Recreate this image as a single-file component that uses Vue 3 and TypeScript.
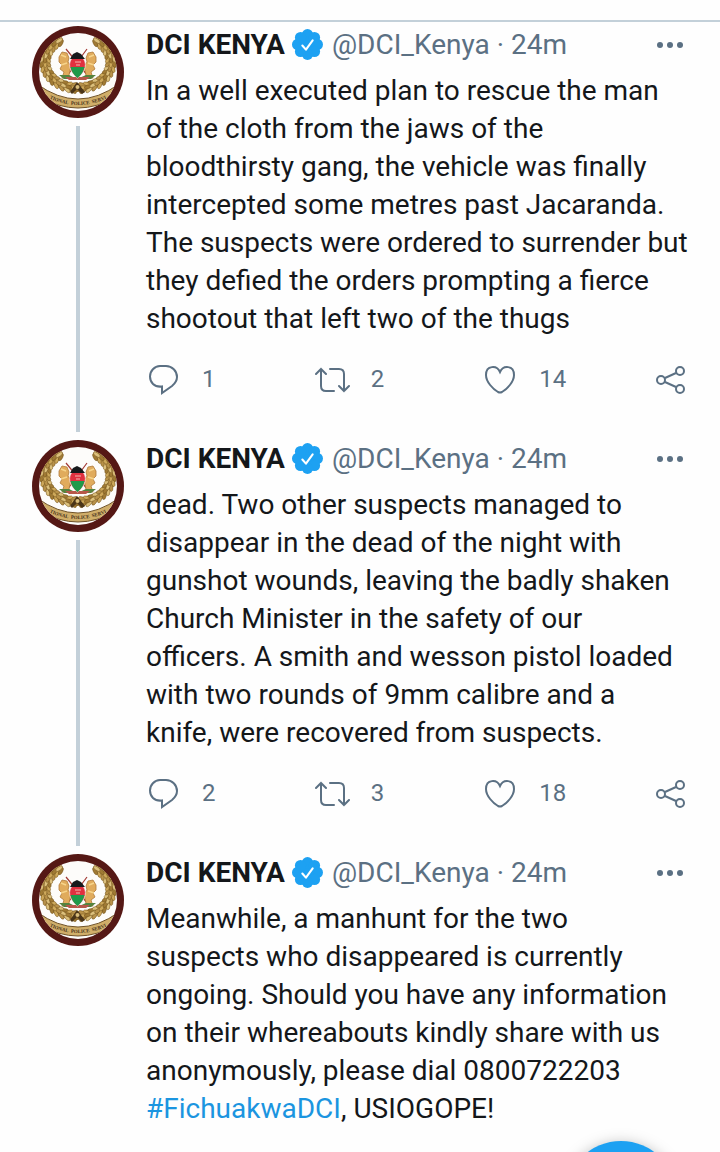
<script setup lang="ts">
interface Tweet {
  id: number
  text: string
  hashtag?: string
  tail?: string
  replies?: number
  retweets?: number
  likes?: number
}

const tweets: Tweet[] = [
  {
    id: 1,
    text: 'In a well executed plan to rescue the man of the cloth from the jaws of the bloodthirsty gang, the vehicle was finally intercepted some metres past Jacaranda. The suspects were ordered to surrender but they defied the orders prompting a fierce shootout that left two of the thugs',
    replies: 1,
    retweets: 2,
    likes: 14,
  },
  {
    id: 2,
    text: 'dead. Two other suspects managed to disappear in the dead of the night with gunshot wounds, leaving the badly shaken Church Minister in the safety of our officers. A smith and wesson pistol loaded with two rounds of 9mm calibre and a knife, were recovered from suspects.',
    replies: 2,
    retweets: 3,
    likes: 18,
  },
  {
    id: 3,
    text: 'Meanwhile, a manhunt for the two\nsuspects who disappeared is currently ongoing. Should you have any information on their whereabouts kindly share with us anonymously, please dial 0800722203 ',
    hashtag: '#FichuakwaDCI',
    tail: ', USIOGOPE!',
  },
]

const motto = 'TIONAL\u00a0 POLICE\u00a0 SERVI'

interface Leaf {
  x: number
  y: number
  turn: number
  fill: string
}

const golds = ['#cda85a', '#a07a34', '#dcc07c', '#b8924a']
const leaves: Leaf[] = []
for (let i = 0; i < 15; i++) {
  const angle = 98 + i * 9.8
  const rad = (angle * Math.PI) / 180
  for (const side of [-1, 1]) {
    for (const lane of [-1, 1, 0]) {
      const x = (33 + lane * 3) * Math.cos(rad)
      const y = (26 + lane * 3) * Math.sin(rad)
      const turn = angle + 90 + lane * 28
      leaves.push({
        x: 46 + side * -x,
        y: 36 + y,
        turn: side === -1 ? turn : -turn,
        fill: golds[(i + lane + 4) % 4],
      })
    }
  }
}
</script>

<template>
  <main class="thread">
    <article v-for="tweet in tweets" :key="tweet.id" class="tweet">
      <div class="rail">
        <svg class="avatar" viewBox="0 0 92 92" role="img" aria-label="DCI Kenya crest">
          <defs>
            <clipPath :id="`disc-${tweet.id}`"><circle cx="46" cy="46" r="39" /></clipPath>
          </defs>
          <circle cx="46" cy="46" r="46" fill="#551815" />
          <circle cx="46" cy="46" r="39" fill="#fdfcfa" />
          <g :clip-path="`url(#disc-${tweet.id})`">
            <path d="M28 15C4 27 6 58 45 62C86 58 88 27 64 15" fill="none" stroke="#8f6c2e" stroke-width="8" />
            <ellipse
              v-for="(leaf, index) in leaves"
              :key="index"
              :cx="leaf.x"
              :cy="leaf.y"
              rx="4"
              ry="1.8"
              :fill="leaf.fill"
              stroke="#76561f"
              stroke-width=".5"
              :transform="`rotate(${leaf.turn} ${leaf.x} ${leaf.y})`"
            />
            <path d="M38 66l7-10 8 10-3 2-5-5-5 5z" fill="#4a3519" />
            <circle cx="45.500" cy="61" r="2" fill="#d9bd7b" />
            <path d="M5 58Q46 88 87 58L84 71Q46 93 8 71Z" fill="#d0ae69" stroke="#6f5227" stroke-width="1" />
            <path :id="`motto-${tweet.id}`" d="M6 66Q46 92 86 66" fill="none" />
            <text class="motto" text-anchor="middle">
              <textPath :href="`#motto-${tweet.id}`" startOffset="50%">{{ motto }}</textPath>
            </text>
          </g>
          <path d="M34 23L56 50M55 23L35 50" stroke="#a33a35" stroke-width="1.200" />
          <path d="M27 31l3-5 5 1 2 5-1 4 3 4-2 9 1 3h-8l2-6-4-3 2-4-3-3zM64 31l-3-5-5 1-2 5 1 4-3 4 2 9-1 3h8l-2-6 4-3-2-4 3-3z" fill="#e0ab5c" stroke="#b07a3a" stroke-width=".8" />
          <path d="M29 29l5 2M29 39l6-2M62 29l-5 2M62 39l-6-2" stroke="#f6d48a" stroke-width="1.500" />
          <path d="M27 49l10 0 8 4 9-4 10 0-5 4H32z" fill="#55833f" />
          <path d="M33 51h25l-4 3H37z" fill="#b7574a" />
          <path d="M45.500 28c10 5 11 15 0 24c-11-9-10-19 0-24z" fill="#e0303f" stroke="#f5e8df" stroke-width=".8" />
          <path d="M38.500 41h14c-1 4-3 8-7 11c-4-3-6-7-7-11z" fill="#1f9a4a" />
          <path d="M38 33l3-5 4-2 4 2 4 5z" fill="#17191b" />
          <path d="M43 36h6M44 39h4" stroke="#f3b8b1" stroke-width="1" />
        </svg>
        <div v-if="tweet.replies !== undefined" class="connector"></div>
      </div>

      <div class="content">
        <header class="heading">
          <strong class="name">DCI KENYA</strong>
          <svg class="verified" viewBox="0 0 30 30" role="img" aria-label="Verified account">
            <g fill="#1da1f2">
              <circle cx="15" cy="15" r="12" />
              <circle cx="15" cy="5.500" r="5.500" /><circle cx="21.700" cy="8.300" r="5.500" />
              <circle cx="24.500" cy="15" r="5.500" /><circle cx="21.700" cy="21.700" r="5.500" />
              <circle cx="15" cy="24.500" r="5.500" /><circle cx="8.300" cy="21.700" r="5.500" />
              <circle cx="5.500" cy="15" r="5.500" /><circle cx="8.300" cy="8.300" r="5.500" />
            </g>
            <path d="M10 16l3.500 4L20 11" fill="none" stroke="#fff" stroke-width="2" stroke-linecap="round" stroke-linejoin="round" />
          </svg>
          <span class="meta">@DCI_Kenya · 24m</span>
          <button class="more" type="button" aria-label="More options">
            <svg width="28" height="8" viewBox="0 0 28 8" fill="currentColor">
              <circle cx="4" cy="4" r="3" /><circle cx="14" cy="4" r="3" /><circle cx="24" cy="4" r="3" />
            </svg>
          </button>
        </header>

        <p class="text">{{ tweet.text }}<a v-if="tweet.hashtag" href="#FichuakwaDCI">{{ tweet.hashtag }}</a>{{ tweet.tail }}</p>

        <footer v-if="tweet.replies !== undefined" class="actions">
          <button type="button" aria-label="Reply">
            <svg width="36" height="32" viewBox="0 0 36 32">
              <path d="M14 3h6a11 11 0 0 1 11 11c0 4-2 6.500-5 9l-10 7v-6.500C8 24.500 4 19 4 13.500A10.500 10.500 0 0 1 14 3z" />
            </svg>
            <span>{{ tweet.replies }}</span>
          </button>
          <button type="button" aria-label="Retweet">
            <svg width="36" height="32" viewBox="0 0 36 32">
              <path d="M1 11l5-5 5 5M6 6v17q0 5 5 5h8M15 6h9q5 0 5 5v17M24 23l5 5 5-5" stroke-linecap="round" />
            </svg>
            <span>{{ tweet.retweets }}</span>
          </button>
          <button type="button" aria-label="Like">
            <svg width="36" height="32" viewBox="0 0 36 32">
              <path d="M17 9C14 2 3 2 3 12c0 7 7 14 12 17q2 1 4 0c5-3 12-10 12-17C31 2 20 2 17 9z" />
            </svg>
            <span>{{ tweet.likes }}</span>
          </button>
          <button class="share" type="button" aria-label="Share">
            <svg width="32" height="32" viewBox="0 0 32 32">
              <circle cx="7" cy="17" r="4" /><circle cx="26" cy="8" r="4" /><circle cx="26" cy="26" r="4" />
              <path d="M11 15l11-5M11 19l11 5" />
            </svg>
          </button>
        </footer>
      </div>
    </article>
    <button class="compose" type="button" aria-label="Compose"></button>
  </main>
</template>

<style>
body {
  margin: 0;
  background: #fefefe;
}
</style>

<style scoped>
.thread {
  margin-top: 20px;
  border-top: 2px solid #c3d0d9;
  padding: 4px 32px 0;
  font-family: Roboto, "Liberation Sans", sans-serif;
  color: #14171a;
}
.tweet {
  display: flex;
  gap: 22px;
}
.rail {
  display: flex;
  flex: none;
  flex-direction: column;
  align-items: center;
  gap: 8px;
  padding-bottom: 8px;
}
.avatar {
  display: block;
  width: 92px;
  height: 92px;
}
.motto {
  font: bold 5px "Liberation Serif", serif;
  fill: #46311a;
}
.connector {
  flex: 1;
  width: 4px;
  background: #c3d0d9;
}
.content {
  flex: 1;
  min-width: 0;
}
.heading {
  display: flex;
  align-items: center;
  height: 38px;
  font-size: 28px;
  line-height: 38px;
  white-space: nowrap;
}
.name {
  font-weight: 700;
}
.verified {
  flex: none;
  width: 31px;
  height: 31px;
  margin: 0 9px 2px 7px;
}
.meta {
  color: #5b7083;
}
button {
  border: 0;
  padding: 0;
  background: none;
  color: #5b7083;
  font: inherit;
}
.more {
  display: flex;
  margin-left: auto;
  padding: 4px;
}
.text {
  margin: 8px 0 0;
  font-size: 28px;
  line-height: 38px;
  white-space: pre-line;
}
.text a {
  color: #1b95e0;
  text-decoration: none;
}
.actions {
  display: flex;
  padding: 24px 0 44px;
}
.actions button {
  display: flex;
  flex: 1;
  align-items: center;
  gap: 20px;
  height: 34px;
  font-size: 24px;
}
.actions .share {
  flex: none;
  width: 36px;
  justify-content: center;
}
.actions svg {
  flex: none;
  fill: none;
  stroke: currentColor;
  stroke-width: 2;
}
.compose {
  position: fixed;
  right: 43px;
  bottom: -101px;
  width: 112px;
  height: 112px;
  border-radius: 50%;
  background: #1da1f2;
  box-shadow: 0 4px 16px rgb(0 0 0 / 35%);
}
</style>
